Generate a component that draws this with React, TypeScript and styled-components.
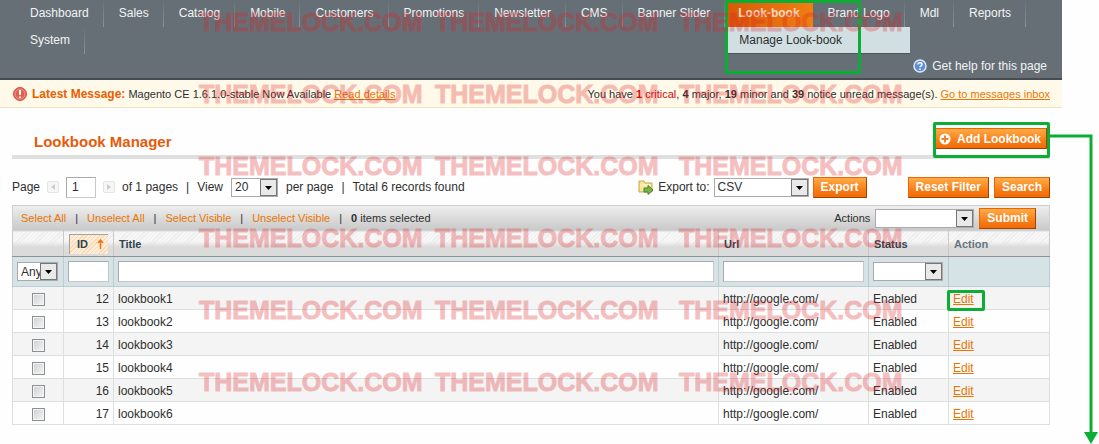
import React from "react";
import styled, { createGlobalStyle, css } from "styled-components";

const GREEN = "#0cad34";

const GlobalStyle = createGlobalStyle`
  * { box-sizing: border-box; }
  body {
    margin: 0;
    background: #fefefe;
    color: #2f2f2f;
    font: 12px/16px "Liberation Sans", Arial, sans-serif;
  }
  button, input, select { font: inherit; color: inherit; }
`;

const Page = styled.div`
  position: relative;
  min-height: 100vh;
  padding-right: 37px;
  overflow: hidden;
`;

/* Header and navigation */
const Header = styled.header`
  background: #676f76;
  border-bottom: 2px solid #464c51;
  color: #f2f4f5;
`;

const Nav = styled.nav`
  display: flex;
  flex-wrap: wrap;
  padding: 0 24px 0 15px;
`;

const NavItem = styled.div`
  position: relative;
  display: flex;
  height: 27px;
`;

const NavLink = styled.a<{ $active?: boolean }>`
  display: block;
  padding: 5px 14px 5px 15px;
  border-right: 1px solid;
  border-image: linear-gradient(rgba(255, 255, 255, 0), #8d9499) 1;
  color: inherit;
  text-decoration: none;
  white-space: nowrap;
  ${(p) =>
    p.$active &&
    css`
      padding: 5px 13px;
      border: 0;
      font-weight: bold;
      background: linear-gradient(90deg, #d85909, #f07e12);
      color: #fbd9c0;
    `}
`;

const SubMenu = styled.div`
  position: absolute;
  top: 27px;
  left: 2px;
  width: 183px;
  padding: 5px 12px;
  background: #d1dfe2;
  border-bottom: 1px solid #4e565c;
  color: #2f2f2f;
  a { color: inherit; text-decoration: none; }
`;

const HelpRow = styled.div`
  display: flex;
  justify-content: flex-end;
  padding: 4px 15px;
`;

const HelpLink = styled.a`
  display: flex;
  align-items: center;
  gap: 5px;
  color: inherit;
  text-decoration: none;
`;

const Highlight = styled.span<{ $kind: "menu" | "button" | "link" }>`
  position: absolute;
  z-index: 2;
  border: 3px solid ${GREEN};
  border-radius: 2px;
  pointer-events: none;
  ${(p) => p.$kind === "menu" && css`top: 0; left: 0; width: 136px; height: 74px;`}
  ${(p) => p.$kind === "button" && css`inset: -6px -3px -9px 0;`}
  ${(p) => p.$kind === "link" && css`top: -1px; left: -6px; width: 38px; height: 21px;`}
`;

/* Messages */
const Messages = styled.div`
  display: flex;
  justify-content: space-between;
  align-items: center;
  height: 28px;
  padding: 0 12px 0 13px;
  background: #fff9e9;
  border-bottom: 1px solid #eee2be;
  font-size: 11px;
`;

const Message = styled.p`
  display: flex;
  align-items: center;
  margin: 0;
  white-space: pre;
  svg { margin-right: 5px; }
`;

const Lead = styled.strong`
  color: #eb5e00;
  font-size: 12px;
`;
const Critical = styled.span`color: #d40707;`;
const OrangeLink = styled.a`color: #ea7601;`;

/* Content */
const Main = styled.main`
  padding: 20px 12px 0;
`;

const TitleBar = styled.div`
  display: flex;
  justify-content: space-between;
  height: 31px;
  padding-left: 22px;
  border-bottom: 4px solid #dfdfdf;
`;

const Title = styled.h1`
  margin: 5px 0 0;
  font-size: 15px;
  line-height: 18px;
  color: #e55b0a;
`;

const ButtonSpot = styled.div`
  position: relative;
  height: 21px;
  margin-right: 3px;
`;

const Button = styled.button<{ $tight?: boolean }>`
  display: flex;
  align-items: center;
  gap: 6px;
  height: 21px;
  padding: 0 ${(p) => (p.$tight ? 5 : 7)}px;
  border: 1px solid;
  border-color: #ed6502 #a04300 #a04300 #ed6502;
  background: linear-gradient(#ffac47, #f97e18 60%, #ef6b08);
  color: #fff;
  font-weight: bold;
  white-space: nowrap;
`;

const Toolbar = styled.div`
  display: flex;
  align-items: center;
  height: 46px;
  padding: 11px 0 1px;
  gap: 8px;
`;

const Pager = styled.div`
  display: flex;
  align-items: center;
  flex: 1;
  gap: 8px;
  white-space: nowrap;
`;

const Group = styled.div<{ $gap?: number }>`
  display: flex;
  align-items: center;
  gap: ${(p) => p.$gap ?? 6}px;
`;

const Spacer = styled.span`width: 25px;`;

const PageArrow = styled.button`
  display: flex;
  align-items: center;
  justify-content: center;
  width: 12px;
  height: 12px;
  padding: 0;
  border: 1px solid #e4e4e4;
  border-radius: 2px;
  background: #f6f6f6;
`;

const TextInput = styled.input<{ $width?: string }>`
  display: block;
  width: ${(p) => p.$width ?? "100%"};
  height: 21px;
  padding: 0 5px;
  border: 1px solid #aaa;
  border-bottom-color: #c8c8c8;
  border-right-color: #c8c8c8;
  border-radius: 0;
  background: #fff;
`;

const SelectBox = styled.div<{ $width: number }>`
  display: grid;
  grid-template-columns: 1fr 17px;
  width: ${(p) => p.$width}px;
  height: 19px;
  border: 1px solid #aaa;
  background: #fff;
  select {
    grid-area: 1 / 1 / 2 / 3;
    width: 100%;
    min-width: 0;
    padding: 0 0 0 3px;
    border: 0;
    background: none;
    appearance: none;
    border-radius: 0;
  }
  svg {
    grid-area: 1 / 2;
    width: 17px;
    height: 17px;
    pointer-events: none;
  }
`;

const MassBar = styled.div`
  display: flex;
  justify-content: space-between;
  align-items: center;
  height: 25px;
  padding: 0 13px 0 8px;
  border: 1px solid #cfcfcf;
  border-bottom: 0;
  background: linear-gradient(#eee, #c9c9c9);
  font-size: 11px;
  button, select { font-size: 12px; }
`;

const MassLinks = styled.div`
  display: flex;
  gap: 9px;
  a { color: #ea7601; text-decoration: none; }
`;

/* Grid */
const Grid = styled.table`
  width: 100%;
  table-layout: fixed;
  border-collapse: collapse;
  border: 1px solid #cbd3d4;
  tbody tr:nth-child(odd) { background: #f4f4f4; }
`;

const HeadCell = styled.th<{ $muted?: boolean }>`
  height: 26px;
  padding: 0 5px;
  border: 0 solid #c9c9c9;
  border-width: 0 1px;
  border-bottom: 1px solid #929292;
  background:
    linear-gradient(rgba(217, 217, 217, 0) 40%, #dbdbdb 62%),
    repeating-linear-gradient(135deg, #ebebeb 0 1px, #f8f8f8 1px 3px);
  color: ${(p) => (p.$muted ? "#67767e" : "#2d444f")};
  font-size: 11px;
  text-align: left;
`;

const SortButton = styled.button`
  display: flex;
  justify-content: space-between;
  width: 100%;
  height: 20px;
  align-items: center;
  padding: 0 4px 0 7px;
  border: 1px solid #a9a39b;
  border-width: 1px 0 0 1px;
  background: repeating-linear-gradient(135deg, #fbd9b0 0 1px, #fdeedb 1px 3px);
  font-weight: bold;
`;

const FilterCell = styled.td`
  height: 30px;
  padding: 0 4px;
  border: 1px solid #bdcccf;
  background: #d5e3e6;
`;

const Cell = styled.td<{ $align?: "center" | "right" }>`
  height: 23px;
  padding: 1px 4px 0;
  border: 1px solid #dadfe0;
  text-align: ${(p) => p.$align ?? "left"};
`;

const Tick = styled.input`
  display: block;
  appearance: none;
  width: 13px;
  height: 13px;
  margin: 2px auto 0;
  border: 1px solid #8e8f8f;
  background: linear-gradient(135deg, #cbcfd5, #f6f6f6);
  box-shadow: inset 0 0 0 1px #f4f4f4;
`;

const EditSpot = styled.span`
  position: relative;
  display: inline-block;
`;

/* Overlays */
const Connector = styled.svg`
  position: absolute;
  top: 134px;
  right: 0;
  width: 50px;
  height: 310px;
`;

const Watermarks = styled.div`
  position: absolute;
  z-index: 3;
  top: 7px;
  left: 199px;
  display: grid;
  grid-template-columns: 236px 244px 222px;
  grid-auto-rows: 72px;
  pointer-events: none;
  opacity: 0.28;
  color: #de1e24;
  font: bold 25px/30px "Liberation Sans", Arial, sans-serif;
  -webkit-text-stroke: 1px #de1e24;
`;

function Select({ label, width, options, id }: { label?: string; width: number; options: string[]; id?: string }) {
  return (
    <SelectBox $width={width}>
      <select id={id} aria-label={label}>
        {options.map((o) => (
          <option key={o}>{o}</option>
        ))}
      </select>
      <svg viewBox="0 0 17 17">
        <rect x=".5" y=".5" width="16" height="16" fill="#e9e9e9" stroke="#777" />
        <path d="M5 7h7l-3.5 4z" fill="#000" />
      </svg>
    </SelectBox>
  );
}

const before = ["Dashboard", "Sales", "Catalog", "Mobile", "Customers", "Promotions", "Newsletter", "CMS", "Banner Slider"];
const after = ["Brand Logo", "Mdl", "Reports", "System"];
const rows = [12, 13, 14, 15, 16, 17].map((id, i) => ({ id, title: `lookbook${i + 1}` }));

function NavEntry({ name }: { name: string }) {
  return (
    <NavItem>
      <NavLink href="#">{name}</NavLink>
    </NavItem>
  );
}

export default function App() {
  return (
    <Page>
      <GlobalStyle />
      <Header>
        <Nav>
          {before.map((n) => <NavEntry key={n} name={n} />)}
          <NavItem>
            <NavLink href="#" $active>Look-book</NavLink>
            <SubMenu><a href="#">Manage Look-book</a></SubMenu>
            <Highlight $kind="menu" />
          </NavItem>
          {after.map((n) => <NavEntry key={n} name={n} />)}
        </Nav>
        <HelpRow>
          <HelpLink href="#">
            <svg width="14" height="14" viewBox="0 0 14 14">
              <circle cx="7" cy="7" r="6" fill="#5b8fd6" stroke="#dce9f8" strokeWidth="1.5" />
              <path d="M5 5.5C5 3.2 9 3.2 9 5.5 9 6.8 7 6.8 7 8.2M7 9.5V11" fill="none" stroke="#fff" strokeWidth="1.5" />
            </svg>
            Get help for this page
          </HelpLink>
        </HelpRow>
      </Header>

      <Messages>
        <Message>
          <svg width="14" height="14" viewBox="0 0 14 14">
            <circle cx="7" cy="7" r="6.5" fill="#e4604f" stroke="#d5503f" />
            <circle cx="7" cy="7" r="5" fill="none" stroke="#f0978b" />
            <path d="M7 3v5M7 9.5V11" stroke="#fff" strokeWidth="2" />
          </svg>
          <Lead>Latest Message:</Lead> Magento CE 1.6.1.0-stable Now Available <OrangeLink href="#">Read details</OrangeLink>
        </Message>
        <Message>
          You have <Critical><b>1</b> critical</Critical>, <b>4</b> major, <b>19</b> minor and <b>39</b> notice unread message(s). <OrangeLink href="#">Go to messages inbox</OrangeLink>
        </Message>
      </Messages>

      <Main>
        <TitleBar>
          <Title>Lookbook Manager</Title>
          <ButtonSpot>
            <Button $tight>
              <svg width="12" height="12" viewBox="0 0 12 12">
                <circle cx="6" cy="6" r="5.5" fill="#fff" />
                <path d="M6 2.5v7M2.5 6h7" stroke="#f58220" strokeWidth="2" />
              </svg>
              Add Lookbook
            </Button>
            <Highlight $kind="button" />
          </ButtonSpot>
        </TitleBar>

        <Toolbar>
          <Pager>
            <Group $gap={7}>
              <label htmlFor="page">Page</label>
              <PageArrow aria-label="Previous page">
                <svg width="6" height="6" viewBox="0 0 6 6"><path d="M5 0v6L1 3z" fill="#ccc" /></svg>
              </PageArrow>
              <TextInput id="page" $width="30px" defaultValue="1" />
              <PageArrow aria-label="Next page">
                <svg width="6" height="6" viewBox="0 0 6 6"><path d="M1 0v6l4-3z" fill="#ccc" /></svg>
              </PageArrow>
              of 1 pages
            </Group>
            <span>|</span>
            <label htmlFor="limit">View</label>
            <Select id="limit" width={47} options={["20"]} />
            <span>per page</span>
            <span>|</span>
            <span>Total 6 records found</span>
          </Pager>
          <Group $gap={4}>
            <svg width="16" height="16" viewBox="0 0 16 16">
              <path d="M1 2h5l1 2h7v9H1z" fill="#f7e59a" stroke="#c5a748" />
              <path d="M2 6h11" stroke="#fff8d5" />
              <path d="M6 9h4V6.500l5 4.500-5 4.500V13H6z" fill="#7cb64a" stroke="#47842b" />
            </svg>
            <label htmlFor="export">Export to:</label>
            <Select id="export" width={95} options={["CSV"]} />
            <Button>Export</Button>
          </Group>
          <Spacer />
          <Group $gap={5}>
            <Button>Reset Filter</Button>
            <Button>Search</Button>
          </Group>
        </Toolbar>

        <MassBar>
          <MassLinks>
            <a href="#">Select All</a><span>|</span>
            <a href="#">Unselect All</a><span>|</span>
            <a href="#">Select Visible</a><span>|</span>
            <a href="#">Unselect Visible</a><span>|</span>
            <span><b>0</b> items selected</span>
          </MassLinks>
          <Group $gap={5}>
            <label htmlFor="actions">Actions</label>
            <Select id="actions" width={99} options={[""]} />
            <Button>Submit</Button>
          </Group>
        </MassBar>

        <Grid>
          <colgroup>
            <col style={{ width: 51 }} />
            <col style={{ width: 50 }} />
            <col />
            <col style={{ width: 150 }} />
            <col style={{ width: 80 }} />
            <col style={{ width: 101 }} />
          </colgroup>
          <thead>
            <tr>
              <HeadCell />
              <HeadCell>
                <SortButton>
                  ID
                  <svg width="7" height="10" viewBox="0 0 7 10">
                    <path d="M3.500 10V1M1 4l2.500-3L6 4" fill="none" stroke="#f07613" strokeWidth="1.500" />
                  </svg>
                </SortButton>
              </HeadCell>
              <HeadCell>Title</HeadCell>
              <HeadCell>Url</HeadCell>
              <HeadCell>Status</HeadCell>
              <HeadCell $muted>Action</HeadCell>
            </tr>
            <tr>
              <FilterCell><Select label="Selection" width={41} options={["Any"]} /></FilterCell>
              <FilterCell><TextInput aria-label="ID" /></FilterCell>
              <FilterCell><TextInput aria-label="Title" /></FilterCell>
              <FilterCell><TextInput aria-label="Url" /></FilterCell>
              <FilterCell><Select label="Status" width={70} options={[""]} /></FilterCell>
              <FilterCell />
            </tr>
          </thead>
          <tbody>
            {rows.map((r, i) => (
              <tr key={r.id}>
                <Cell><Tick type="checkbox" aria-label={r.title} /></Cell>
                <Cell $align="right">{r.id}</Cell>
                <Cell>{r.title}</Cell>
                <Cell>http://google.com/</Cell>
                <Cell>Enabled</Cell>
                <Cell>
                  <EditSpot>
                    <OrangeLink href="#">Edit</OrangeLink>
                    {i === 0 && <Highlight $kind="link" />}
                  </EditSpot>
                </Cell>
              </tr>
            ))}
          </tbody>
        </Grid>
      </Main>

      <Connector viewBox="0 0 50 310">
        <path d="M0 2H42V300" fill="none" stroke={GREEN} strokeWidth="3" />
        <path d="M35 298h14l-7 12z" fill={GREEN} />
      </Connector>

      <Watermarks aria-hidden="true">
        {Array.from({ length: 18 }, (_, i) => <span key={i}>THEMELOCK.COM</span>)}
      </Watermarks>
    </Page>
  );
}
